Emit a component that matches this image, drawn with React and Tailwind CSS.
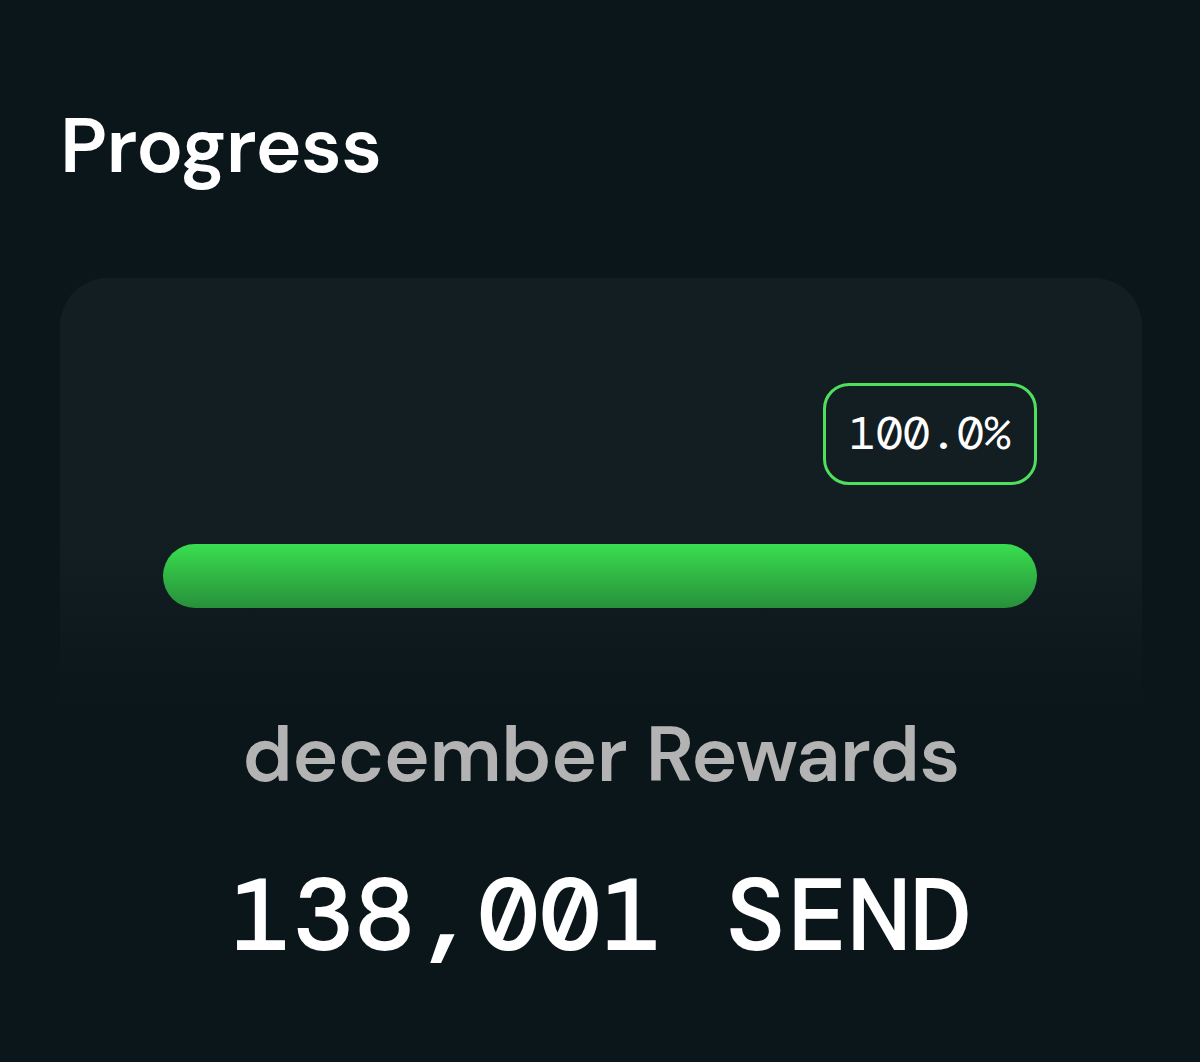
export default function App() {
  return (
    <div className="min-h-[1062px] w-[1200px] bg-[#0a161a] pl-[60px] pr-[58px] pt-[100px] font-['DM_Sans',Inter,sans-serif]">
      <h1 className="text-[78px] font-semibold leading-[92px] tracking-[-0.5px] text-white">Progress</h1>
      <div className="mt-[86px] h-[430px] rounded-t-[48px] bg-gradient-to-b from-[#131e22] from-60% to-[#0a161a] pl-[103px] pr-[105px] pt-[105px]">
        <div className="flex justify-end">
          <div className="flex h-[102px] w-[214px] items-center justify-center rounded-[26px] border-[3px] border-[#4fde5e] font-['DM_Mono',monospace] text-[45px] text-white">
            100.0%
          </div>
        </div>
        <div className="mt-[59px] h-[64px] w-full rounded-full bg-gradient-to-b from-[#3ade4f] to-[#27903a]" />
      </div>
      <div className="flex flex-col items-center">
        <div className="mt-[2px] text-[78px] font-semibold leading-[90px] tracking-[-0.5px] text-[#b3b3b3]">december Rewards</div>
        <div className="mt-[55px] font-['DM_Mono',monospace] text-[103px] font-medium leading-[120px] text-white">138,001 SEND</div>
      </div>
    </div>
  );
}
